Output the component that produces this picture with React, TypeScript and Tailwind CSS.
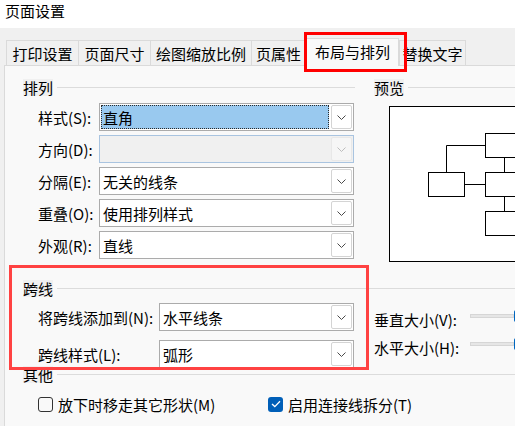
import clsx from "clsx"

function Chevron({ disabled }: { disabled?: boolean }) {
  return (
    <svg width="9" height="5" viewBox="0 0 9 5">
      <path
        d="M0.5 0.5 L4.5 4.5 L8.5 0.5"
        fill="none"
        stroke={disabled ? "#bdbdbd" : "#4a4a4a"}
        strokeWidth="1"
      />
    </svg>
  )
}

function Combo({
  value,
  className,
  selected,
  disabled,
}: {
  value?: string
  className?: string
  selected?: boolean
  disabled?: boolean
}) {
  return (
    <div
      className={clsx(
        "flex h-[28px] items-center border p-[1px]",
        disabled ? "border-[#a9c4e0] bg-[#f0f0f0]" : "border-[#ababab] bg-white",
        className
      )}
    >
      <div
        className={clsx(
          "flex h-full flex-1 items-center border pl-[1px] leading-none",
          selected ? "border-dotted border-[#2b2b2b] bg-[#99c9ef]" : "border-transparent"
        )}
      >
        {value}
      </div>
      <div
        className={clsx(
          "ml-[2px] flex h-full w-[21px] items-center justify-center rounded-[2px] border",
          disabled ? "border-[#e8e8e8] bg-[#f6f6f6]" : "border-[#d4d4d4] bg-white"
        )}
      >
        <Chevron disabled={disabled} />
      </div>
    </div>
  )
}

function GroupHeader({ title }: { title: string }) {
  return (
    <div className="flex h-[17px] items-center">
      <span className="bg-[#f0f0f0] leading-[17px]">{title}</span>
      <div className="ml-[4px] h-px flex-1 bg-[#dcdcdc]" />
    </div>
  )
}

function Slider({ label }: { label: string }) {
  return (
    <div className="flex h-[20px] items-start">
      <span className="mt-[5px] w-[96px] shrink-0 leading-[17px]">{label}</span>
      <div className="mt-[8px] h-[4px] w-[44px] shrink-0 border border-[#d6d6d6] bg-[#e6e6e6]" />
      <div className="mt-[4px] h-[12px] w-[6px] shrink-0 rounded-[2px] bg-[#0067c0]" />
    </div>
  )
}

const tabs = [
  { name: "打印设置", w: "w-[72px]" },
  { name: "页面尺寸", w: "w-[72px]" },
  { name: "绘图缩放比例", w: "w-[101px]" },
  { name: "页属性", w: "w-[55px] border-r" },
]

const arrangeRows = [
  { label: "样式(S):", value: "直角", selected: true },
  { label: "方向(D):", value: "", disabled: true },
  { label: "分隔(E):", value: "无关的线条" },
  { label: "重叠(O):", value: "使用排列样式" },
  { label: "外观(R):", value: "直线" },
]

export default function App() {
  return (
    <div className="relative h-[426px] w-[515px] overflow-hidden bg-[#f0f0f0] font-['Noto_Sans_CJK_SC',sans-serif] text-[15px] text-black">
      <div className="h-[28px] bg-white pl-[5px] pt-[2px] leading-[17px]">页面设置</div>

      {/* tabs */}
      <div className="mt-[10px] flex h-[27px] items-end pl-[6px]">
        {tabs.map((t) => (
          <div
            key={t.name}
            className={clsx(
              "flex h-[25px] shrink-0 items-center justify-center border-l border-t border-[#dadada] bg-[#f0f0f0] leading-none",
              t.w
            )}
          >
            {t.name}
          </div>
        ))}
        <div className="relative z-10 mb-[-1px] flex h-[28px] w-[93px] shrink-0 items-center justify-center border-x border-t border-[#dadada] bg-[#f9f9f9] pb-[2px] leading-none">
          布局与排列
        </div>
        <div className="flex h-[25px] w-[67px] shrink-0 items-center justify-center border-x border-t border-[#dadada] bg-[#f0f0f0] leading-none">
          替换文字
        </div>
      </div>

      {/* panel */}
      <div className="ml-[4px] h-[361px] border-l border-t border-[#dadada] bg-[#f9f9f9] pt-[13px]">
        <div className="flex">
          <div className="w-[350px] shrink-0 pl-[18px]">
            <GroupHeader title="排列" />
            <div className="mt-[7px] flex flex-col gap-[4px] pl-[15px]">
              {arrangeRows.map((r) => (
                <div key={r.label} className="flex items-center">
                  <span className="w-[61px] shrink-0 leading-none">{r.label}</span>
                  <Combo
                    value={r.value}
                    selected={r.selected}
                    disabled={r.disabled}
                    className="w-[255px]"
                  />
                </div>
              ))}
            </div>
          </div>
          <div className="flex-1 pl-[19px]">
            <GroupHeader title="预览" />
            <div className="ml-[15px] mt-[10px] h-[156px] w-[200px] border border-black bg-white">
              <svg width="198" height="154" viewBox="0 0 198 154" fill="none" stroke="#000" strokeWidth="1">
                <rect x="95.5" y="26.5" width="36" height="24" fill="#fff" />
                <rect x="95.5" y="65.5" width="36" height="24" fill="#fff" />
                <rect x="38.5" y="65.5" width="36" height="24" fill="#fff" />
                <rect x="95.5" y="104.5" width="36" height="24" fill="#fff" />
                <path d="M56.5 65.5 V38.5 H95.5" />
                <path d="M74.5 77.5 H95.5" />
                <path d="M114.5 50.5 V65.5" />
                <path d="M114.5 89.5 V104.5" />
              </svg>
            </div>
          </div>
        </div>

        <div className="mt-[18px] pl-[18px]">
          <GroupHeader title="跨线" />
        </div>
        <div className="mt-[6px] flex">
          <div className="flex w-[350px] shrink-0 flex-col gap-[9px] pl-[33px]">
            <div className="flex items-center">
              <span className="w-[121px] shrink-0 leading-none">将跨线添加到(N):</span>
              <Combo value="水平线条" className="w-[195px]" />
            </div>
            <div className="flex items-center">
              <span className="w-[121px] shrink-0 leading-none">跨线样式(L):</span>
              <Combo value="弧形" className="w-[195px]" />
            </div>
          </div>
          <div className="flex flex-1 flex-col gap-[8px] pl-[19px] pt-[3px]">
            <Slider label="垂直大小(V):" />
            <Slider label="水平大小(H):" />
          </div>
        </div>

        <div className="mt-[-2px] pl-[18px]">
          <GroupHeader title="其他" />
        </div>
        <div className="mt-[13px] flex h-[16px] items-center pl-[33px]">
          <div className="flex w-[230px] shrink-0 items-center">
            <div className="h-[15px] w-[15px] shrink-0 rounded-[3px] border border-[#333]" />
            <span className="ml-[5px] leading-none">放下时移走其它形状(M)</span>
          </div>
          <div className="flex items-center">
            <div className="flex h-[15px] w-[15px] shrink-0 items-center justify-center rounded-[3px] bg-[#005fb8]">
              <svg width="10" height="8" viewBox="0 0 10 8" fill="none">
                <path d="M1 4 L3.8 6.6 L9 1.2" stroke="#fff" strokeWidth="1.3" />
              </svg>
            </div>
            <span className="ml-[5px] leading-none">启用连接线拆分(T)</span>
          </div>
        </div>
      </div>

      {/* annotation boxes */}
      <div className="pointer-events-none absolute left-[304px] top-[32px] z-20 h-[40px] w-[103px] border-[3px] border-[#ff0000]" />
      <div className="pointer-events-none absolute left-[9px] top-[265px] z-20 h-[105px] w-[360px] border-[3px] border-[#ff4242]" />
    </div>
  )
}
